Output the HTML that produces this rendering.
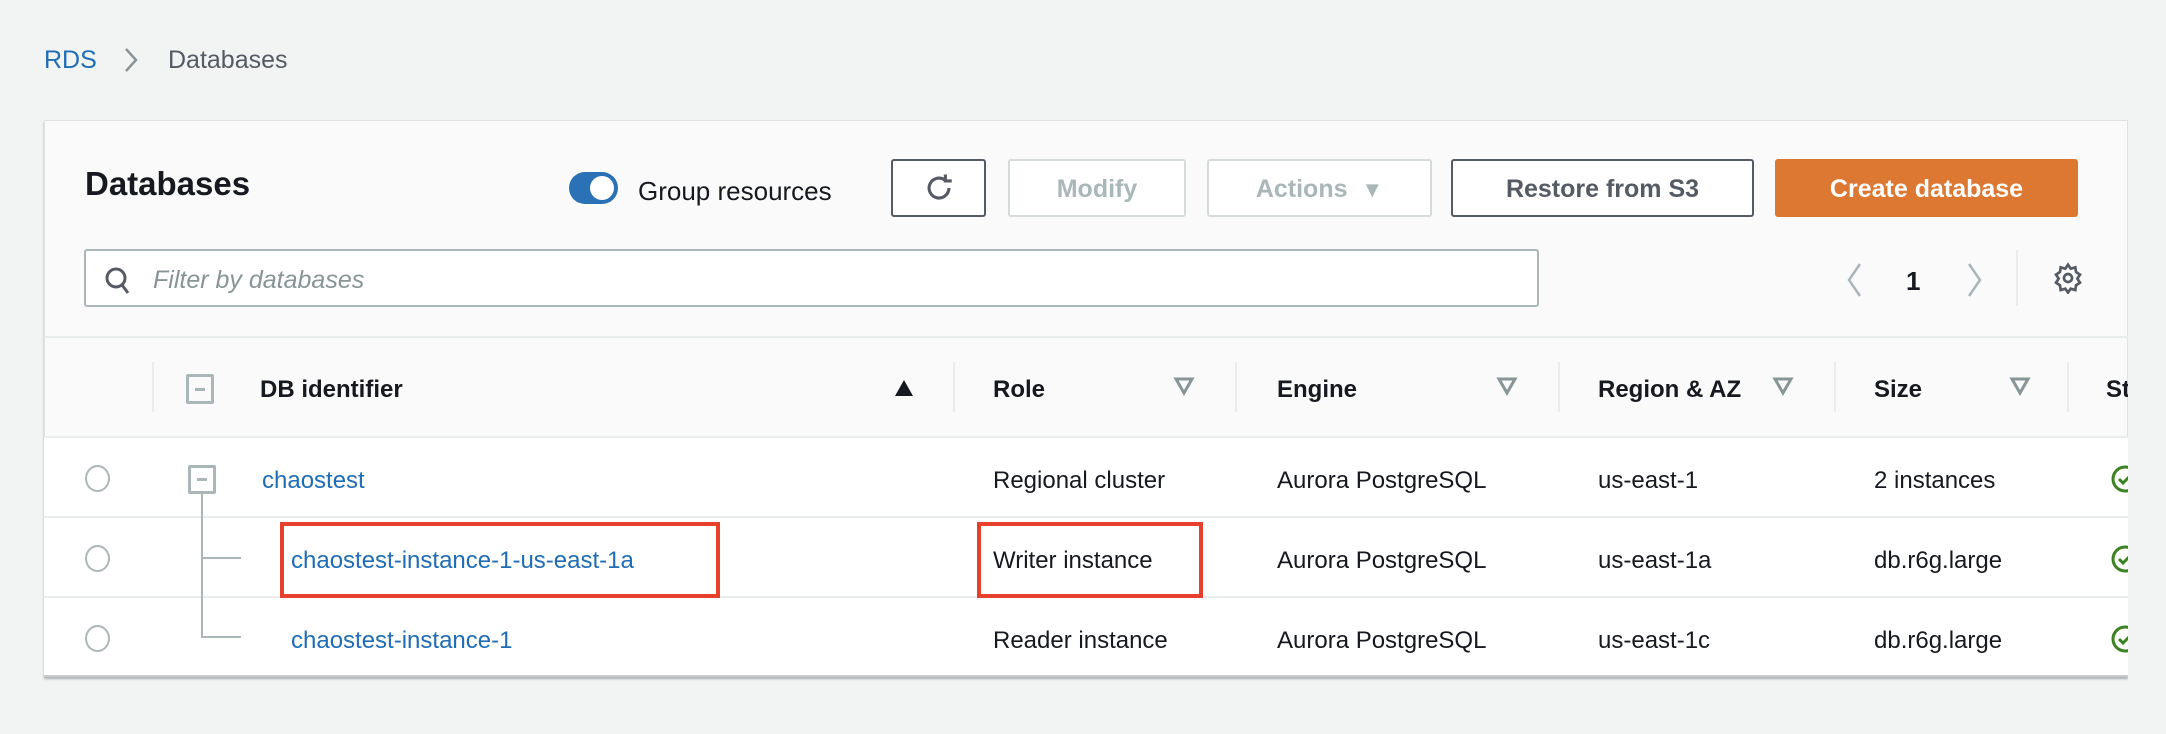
<!DOCTYPE html>
<html><head><meta charset="utf-8"><style>
*{margin:0;padding:0;box-sizing:border-box}
body{width:2166px;height:734px;background:#f2f3f3;font-family:"Liberation Sans",sans-serif;position:relative;overflow:hidden;color:#16191f}
.a{position:absolute;white-space:nowrap}
.card{position:absolute;left:44px;top:120px;width:2084px;height:557px;background:#fafafa;border:1px solid #dfe2e2;box-shadow:0 2px 2px rgba(0,28,36,.3);overflow:hidden}
.btn{position:absolute;top:159px;height:58px;border-radius:3px;font-weight:bold;font-size:25px;display:flex;align-items:center;justify-content:center}
.row{position:absolute;left:0;width:2084px;background:#fff;border-top:2px solid #eaeded}
.t{position:absolute;font-size:24px;transform:translateY(-50%);margin-top:3px}
.link{color:#1f6db5}
.hd{position:absolute;font-size:24px;font-weight:bold;top:390px;transform:translateY(-50%);color:#16191f}
.vd{position:absolute;top:362px;height:50px;width:2px;background:#eaeded}
.tri{position:absolute;top:376px}
.radio{position:absolute;left:85px;width:25px;height:27px;border:2px solid #aab7b8;border-radius:50%}
.red{position:absolute;border:4px solid #e8412b}
</style></head><body>
<div class="a link" style="left:44px;top:46px;font-size:25px">RDS</div>
<svg class="a" style="left:123px;top:46px" width="16" height="28" viewBox="0 0 16 28" fill="none" stroke="#879596" stroke-width="2.5"><path d="M3 3l10 11-10 11"/></svg>
<div class="a" style="left:168px;top:46px;font-size:25px;color:#545b64">Databases</div>

<div class="card">
<div class="a" style="left:40px;top:44px;font-size:33px;font-weight:bold">Databases</div>
<div class="a" style="left:524px;top:51px;width:49px;height:32px;border-radius:16px;background:#2b71b6"><div style="position:absolute;right:4px;top:4px;width:24px;height:24px;border-radius:50%;background:#fff"></div></div>
<div class="a" style="left:593px;top:55px;font-size:26px">Group resources</div>
</div>
<div class="btn" style="left:891px;width:95px;border:2px solid #545b64;background:#fff">
<svg width="34" height="34" viewBox="0 0 24 24" fill="none" stroke="#545b64" stroke-width="2.2"><path d="M19 12a7 7 0 1 1-3-5.7"/><path d="M16.5 2.5v4.5h4.5" /></svg></div>
<div class="btn" style="left:1008px;width:178px;border:2px solid #d5dbdb;background:#fff;color:#aab7b8;padding-top:3px">Modify</div>
<div class="btn" style="left:1207px;width:225px;border:2px solid #d5dbdb;background:#fff;color:#aab7b8;padding-top:3px">Actions&nbsp;&nbsp;<span style="font-size:22px">▼</span></div>
<div class="btn" style="left:1451px;width:303px;border:2px solid #545b64;background:#fff;color:#545b64;padding-top:3px">Restore from S3</div>
<div class="btn" style="left:1775px;width:303px;background:#dd7833;color:#fff;padding-top:3px">Create database</div>

<div class="a" style="left:84px;top:249px;width:1455px;height:58px;background:#fff;border:2px solid #aab7b8;border-radius:3px"></div>
<svg class="a" style="left:104px;top:266px" width="28" height="30" viewBox="0 0 28 30" fill="none" stroke="#545b64" stroke-width="3"><circle cx="12" cy="12" r="9"/><path d="M18 19l6 8"/></svg>
<div class="a" style="left:153px;top:266px;font-size:25px;font-style:italic;color:#879596">Filter by databases</div>

<svg class="a" style="left:1845px;top:262px" width="18" height="36" viewBox="0 0 18 36" fill="none" stroke="#aab7b8" stroke-width="2.5"><path d="M15 2L4 18l11 16"/></svg>
<div class="a" style="left:1906px;top:266px;font-size:26px;font-weight:bold">1</div>
<svg class="a" style="left:1966px;top:262px" width="18" height="36" viewBox="0 0 18 36" fill="none" stroke="#aab7b8" stroke-width="2.5"><path d="M3 2l11 16L3 34"/></svg>
<div class="a" style="left:2016px;top:250px;width:2px;height:56px;background:#eaeded"></div>
<svg class="a" style="left:2052px;top:262px" width="32" height="32" viewBox="0 0 24 24" fill="none" stroke="#545b64" stroke-width="2"><circle cx="12" cy="12" r="3"/><path d="M12 2l2 3 3.5-1 .5 3.5 3 2-2 3 2 3-3 2-.5 3.5-3.5-1-2 3-2-3-3.5 1-.5-3.5-3-2 2-3-2-3 3-2 .5-3.5 3.5 1z"/></svg>

<div class="a" style="left:44px;top:336px;width:2084px;height:2px;background:#eaeded"></div>
<div class="vd" style="left:152px"></div><div class="vd" style="left:953px"></div><div class="vd" style="left:1235px"></div><div class="vd" style="left:1558px"></div><div class="vd" style="left:1834px"></div><div class="vd" style="left:2067px"></div>
<div class="a" style="left:186px;top:374px;width:28px;height:30px;border:3px solid #aab7b8;border-radius:2px"><div style="position:absolute;left:6px;top:11px;width:10px;height:3px;background:#aab7b8"></div></div>
<div class="hd" style="left:260px">DB identifier</div>
<svg class="a" style="left:894px;top:379px" width="20" height="18" viewBox="0 0 20 18"><path d="M10 1L19 17H1z" fill="#16191f"/></svg>
<svg class="tri" style="left:1173px" width="22" height="20" viewBox="0 0 22 20"><path d="M3 3h16L11 17z" fill="none" stroke="#879596" stroke-width="3"/></svg>
<div class="hd" style="left:993px">Role</div>
<div class="hd" style="left:1277px">Engine</div><svg class="tri" style="left:1496px" width="22" height="20" viewBox="0 0 22 20"><path d="M3 3h16L11 17z" fill="none" stroke="#879596" stroke-width="3"/></svg>
<div class="hd" style="left:1598px">Region &amp; AZ</div><svg class="tri" style="left:1772px" width="22" height="20" viewBox="0 0 22 20"><path d="M3 3h16L11 17z" fill="none" stroke="#879596" stroke-width="3"/></svg>
<div class="hd" style="left:1874px">Size</div><svg class="tri" style="left:2009px" width="22" height="20" viewBox="0 0 22 20"><path d="M3 3h16L11 17z" fill="none" stroke="#879596" stroke-width="3"/></svg>
<div class="hd" style="left:2106px">St</div>

<div class="row" style="left:44px;top:436px;height:81px"></div>
<div class="row" style="left:44px;top:516px;height:81px"></div>
<div class="row" style="left:44px;top:596px;height:81px;border-bottom:2px solid #c8ccce"></div>
<div class="a" style="left:2128px;top:120px;width:38px;height:600px;background:#f2f3f3"></div>

<div class="radio" style="top:465px"></div><div class="radio" style="top:545px"></div><div class="radio" style="top:625px"></div>
<div class="a" style="left:188px;top:465px;width:28px;height:29px;border:3px solid #aab7b8;border-radius:2px;background:#fff"><div style="position:absolute;left:6px;top:10px;width:10px;height:3px;background:#aab7b8"></div></div>
<div class="a" style="left:201px;top:494px;width:2px;height:143px;background:#aab7b8"></div>
<div class="a" style="left:201px;top:557px;width:40px;height:2px;background:#aab7b8"></div>
<div class="a" style="left:201px;top:636px;width:40px;height:2px;background:#aab7b8"></div>

<div class="t link" style="left:262px;top:478px">chaostest</div>
<div class="t link" style="left:291px;top:558px">chaostest-instance-1-us-east-1a</div>
<div class="t link" style="left:291px;top:638px">chaostest-instance-1</div>
<div class="red" style="left:280px;top:522px;width:440px;height:76px"></div>
<div class="red" style="left:977px;top:522px;width:226px;height:76px"></div>

<div class="t" style="left:993px;top:478px">Regional cluster</div>
<div class="t" style="left:993px;top:558px">Writer instance</div>
<div class="t" style="left:993px;top:638px">Reader instance</div>
<div class="t" style="left:1277px;top:478px">Aurora PostgreSQL</div>
<div class="t" style="left:1277px;top:558px">Aurora PostgreSQL</div>
<div class="t" style="left:1277px;top:638px">Aurora PostgreSQL</div>
<div class="t" style="left:1598px;top:478px">us-east-1</div>
<div class="t" style="left:1598px;top:558px">us-east-1a</div>
<div class="t" style="left:1598px;top:638px">us-east-1c</div>
<div class="t" style="left:1874px;top:478px">2 instances</div>
<div class="t" style="left:1874px;top:558px">db.r6g.large</div>
<div class="t" style="left:1874px;top:638px">db.r6g.large</div>
<div class="a" style="left:2110px;top:464px;width:18px;height:30px;overflow:hidden"><svg width="30" height="30" viewBox="0 0 30 30" fill="none" stroke="#3b8221" stroke-width="3"><circle cx="15" cy="15" r="12"/><path d="M9 15l4 4 8-8"/></svg></div>
<div class="a" style="left:2110px;top:544px;width:18px;height:30px;overflow:hidden"><svg width="30" height="30" viewBox="0 0 30 30" fill="none" stroke="#3b8221" stroke-width="3"><circle cx="15" cy="15" r="12"/><path d="M9 15l4 4 8-8"/></svg></div>
<div class="a" style="left:2110px;top:624px;width:18px;height:30px;overflow:hidden"><svg width="30" height="30" viewBox="0 0 30 30" fill="none" stroke="#3b8221" stroke-width="3"><circle cx="15" cy="15" r="12"/><path d="M9 15l4 4 8-8"/></svg></div>
</body></html>
